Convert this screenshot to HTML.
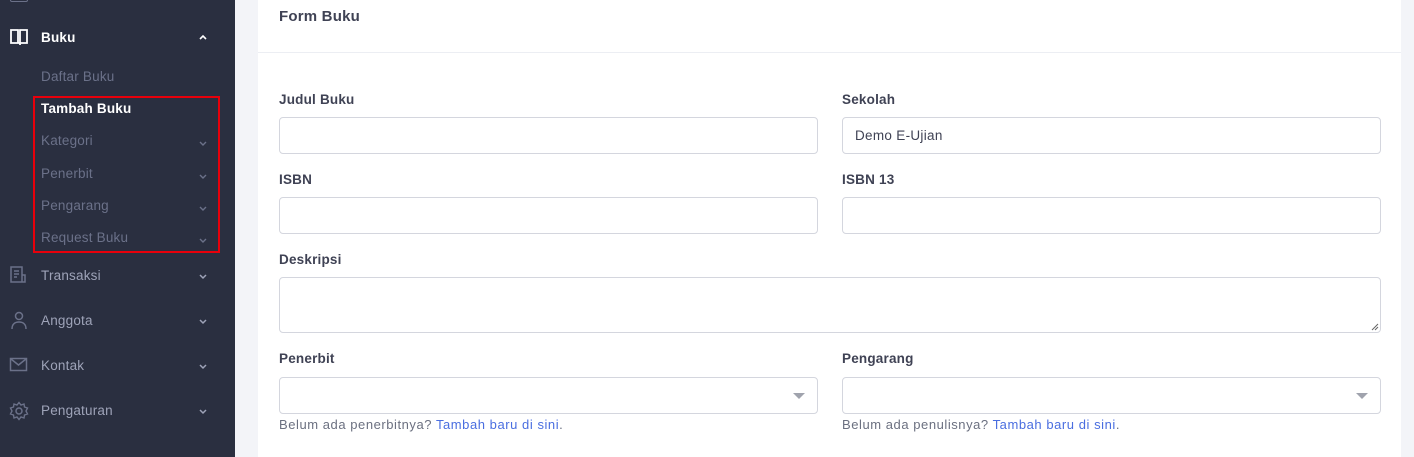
<!DOCTYPE html>
<html><head><meta charset="utf-8"><style>
*{box-sizing:border-box;margin:0;padding:0}
body{width:1414px;height:457px;overflow:hidden;background:#f3f4f8;font-family:"Liberation Sans",sans-serif;position:relative}
.sb{position:absolute;left:0;top:0;width:235px;height:457px;background:#2a2f40}
.it{position:absolute;left:41px;font-size:13.5px;color:#9ea3b8;letter-spacing:0.2px}
.sub{color:#6b7189;font-size:13.5px}
.chev{position:absolute;left:198px;width:10px;height:10px}
.ic{position:absolute;left:9px}
.card{position:absolute;left:258px;top:0;width:1143px;height:457px;background:#fff}
.hd{position:absolute;left:0;top:0;width:100%;height:53px;border-bottom:1px solid #eceef3}
.hd span{position:absolute;left:21px;top:8px;font-size:15px;font-weight:bold;color:#3f4254;letter-spacing:0.2px}
.lb{position:absolute;font-size:13.5px;font-weight:bold;color:#3f4254;letter-spacing:0.2px}
.in{position:absolute;height:37px;border:1px solid #d4d6de;border-radius:4px;background:#fff;font-size:13.5px;color:#3f4254;padding:10px 12px;letter-spacing:0.3px}
.hint{position:absolute;font-size:13px;color:#6b7080;letter-spacing:0.55px}
.hint a{color:#4a6ee0;text-decoration:none}
.tri{position:absolute;right:12px;top:15px;width:0;height:0;border-left:6px solid transparent;border-right:6px solid transparent;border-top:6px solid #a0a3ad}
</style></head><body>
<div class="sb">
  <div style="position:absolute;left:10px;top:-6px;width:18px;height:8px;border:1.5px solid #6b7189;border-radius:2px"></div>
  <svg class="ic" style="top:28px" width="20" height="18" viewBox="0 0 20 18"><path d="M2 2h7v13H2zM11 2h7v13h-7zM9 15h2v2" fill="none" stroke="#fff" stroke-width="1.8"/></svg>
  <div class="it" style="top:30px;color:#fff;font-weight:bold">Buku</div>
  <svg class="chev" style="top:33px" viewBox="0 0 10 10"><path d="M2 6l3-3 3 3" fill="none" stroke="#fff" stroke-width="1.6"/></svg>
  <div class="it sub" style="top:69px">Daftar Buku</div>
  <div class="it" style="top:101px;color:#fff;font-weight:bold">Tambah Buku</div>
  <div class="it sub" style="top:133px">Kategori</div>
  <div class="it sub" style="top:166px">Penerbit</div>
  <div class="it sub" style="top:198px">Pengarang</div>
  <div class="it sub" style="top:230px">Request Buku</div>
  <svg class="chev" style="top:138px" viewBox="0 0 10 10"><path d="M2 4l3 3 3-3" fill="none" stroke="#6b7189" stroke-width="1.4"/></svg>
  <svg class="chev" style="top:171px" viewBox="0 0 10 10"><path d="M2 4l3 3 3-3" fill="none" stroke="#6b7189" stroke-width="1.4"/></svg>
  <svg class="chev" style="top:203px" viewBox="0 0 10 10"><path d="M2 4l3 3 3-3" fill="none" stroke="#6b7189" stroke-width="1.4"/></svg>
  <svg class="chev" style="top:235px" viewBox="0 0 10 10"><path d="M2 4l3 3 3-3" fill="none" stroke="#6b7189" stroke-width="1.4"/></svg>
  <div style="position:absolute;left:33px;top:96px;width:187px;height:157px;border:2px solid #e8000b"></div>
  <svg class="ic" style="top:266px" width="20" height="18" viewBox="0 0 20 18"><path d="M2 1h11v15H2zM13 9h3v7h-3M5 5h5M5 8h5M5 11h3" fill="none" stroke="#6b7189" stroke-width="1.5"/></svg>
  <div class="it" style="top:268px">Transaksi</div>
  <svg class="ic" style="top:310px" width="20" height="20" viewBox="0 0 20 20"><circle cx="10" cy="6" r="3.5" fill="none" stroke="#6b7189" stroke-width="1.5"/><path d="M3 19c0-5 3-7 7-7s7 2 7 7" fill="none" stroke="#6b7189" stroke-width="1.5"/></svg>
  <div class="it" style="top:313px">Anggota</div>
  <svg class="ic" style="top:357px" width="20" height="16" viewBox="0 0 20 16"><rect x="1.5" y="1.5" width="16" height="12" fill="none" stroke="#6b7189" stroke-width="1.5"/><path d="M2 2l7.5 6 7.5-6" fill="none" stroke="#6b7189" stroke-width="1.5"/></svg>
  <div class="it" style="top:358px">Kontak</div>
  <svg class="ic" style="top:401px" width="20" height="20" viewBox="0 0 20 20"><circle cx="10" cy="10" r="3" fill="none" stroke="#6b7189" stroke-width="1.5"/><path d="M10 1.5l2 2.5 3-1 .5 3 3 1-1.5 3 1.5 3-3 1-.5 3-3-1-2 2.5-2-2.5-3 1-.5-3-3-1 1.5-3-1.5-3 3-1 .5-3 3 1z" fill="none" stroke="#6b7189" stroke-width="1.4"/></svg>
  <div class="it" style="top:403px">Pengaturan</div>
  <svg class="chev" style="top:271px" viewBox="0 0 10 10"><path d="M2 4l3 3 3-3" fill="none" stroke="#9ea3b8" stroke-width="1.5"/></svg>
  <svg class="chev" style="top:316px" viewBox="0 0 10 10"><path d="M2 4l3 3 3-3" fill="none" stroke="#9ea3b8" stroke-width="1.5"/></svg>
  <svg class="chev" style="top:361px" viewBox="0 0 10 10"><path d="M2 4l3 3 3-3" fill="none" stroke="#9ea3b8" stroke-width="1.5"/></svg>
  <svg class="chev" style="top:406px" viewBox="0 0 10 10"><path d="M2 4l3 3 3-3" fill="none" stroke="#9ea3b8" stroke-width="1.5"/></svg>
</div>
<div class="card">
  <div class="hd"><span>Form Buku</span></div>
  <div class="lb" style="left:21px;top:92px">Judul Buku</div>
  <div class="lb" style="left:584px;top:92px">Sekolah</div>
  <div class="in" style="left:21px;top:117px;width:539px"></div>
  <div class="in" style="left:584px;top:117px;width:539px">Demo E-Ujian</div>
  <div class="lb" style="left:21px;top:172px">ISBN</div>
  <div class="lb" style="left:584px;top:172px">ISBN 13</div>
  <div class="in" style="left:21px;top:197px;width:539px"></div>
  <div class="in" style="left:584px;top:197px;width:539px"></div>
  <div class="lb" style="left:21px;top:252px">Deskripsi</div>
  <div class="in" style="left:21px;top:277px;width:1102px;height:56px"><svg style="position:absolute;right:1px;bottom:1px" width="8" height="8" viewBox="0 0 8 8"><path d="M7 1L1 7M7 4L4 7" stroke="#666" stroke-width="1"/></svg></div>
  <div class="lb" style="left:21px;top:351px">Penerbit</div>
  <div class="lb" style="left:584px;top:351px">Pengarang</div>
  <div class="in" style="left:21px;top:377px;width:539px"><div class="tri"></div></div>
  <div class="in" style="left:584px;top:377px;width:539px"><div class="tri"></div></div>
  <div class="hint" style="left:21px;top:417px">Belum ada penerbitnya? <a>Tambah baru di sini</a>.</div>
  <div class="hint" style="left:584px;top:417px">Belum ada penulisnya? <a>Tambah baru di sini</a>.</div>
</div>
</body></html>
